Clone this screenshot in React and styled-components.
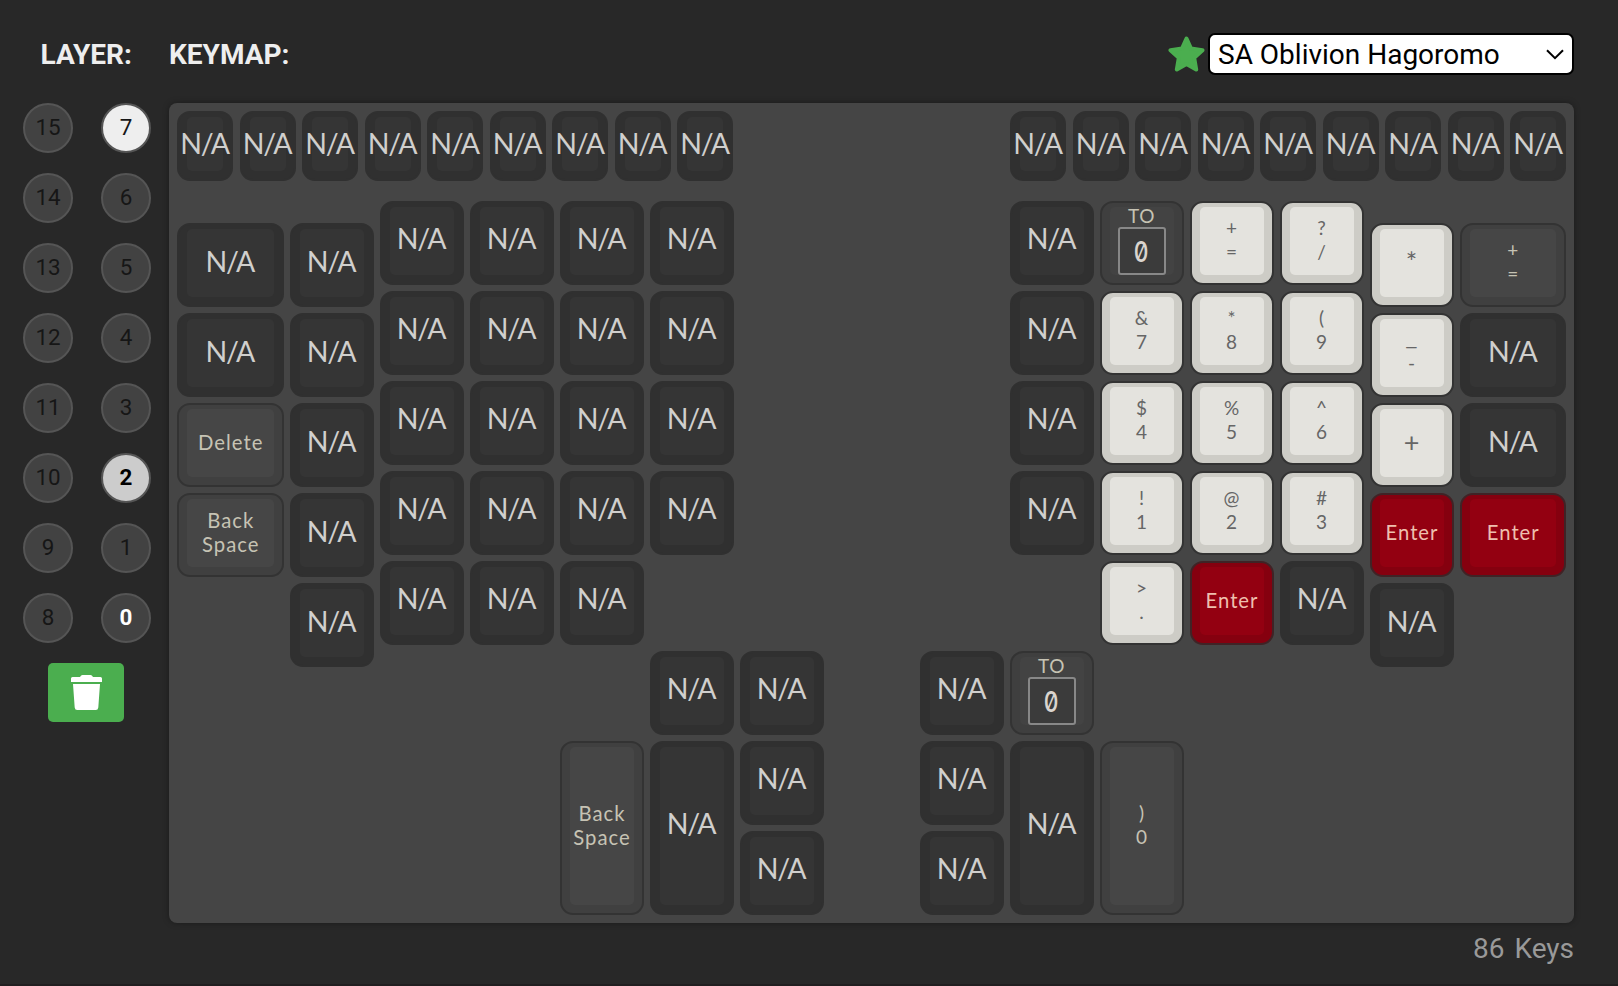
import React from "react";
import styled, { createGlobalStyle, css } from "styled-components";

const GlobalStyle = createGlobalStyle`
  body {
    margin: 0;
    background: #282828;
    font-family: Roboto, "Liberation Sans", sans-serif;
  }
`;

const Page = styled.div`
  box-sizing: border-box;
  display: flex;
  width: 1618px;
  height: 986px;
  overflow: hidden;
  background: #282828;
  border-bottom: 2px solid #211f20;
`;

const Sidebar = styled.aside`
  display: flex;
  flex-direction: column;
  width: 169px;
`;

const Heading = styled.h3`
  margin: 0;
  font-size: 28px;
  line-height: 34px;
  font-weight: 700;
  color: #eee;
`;

const SidebarHead = styled.div`
  box-sizing: border-box;
  height: 103px;
  padding: 38px 0 0 40.5px;
`;

const LayerGrid = styled.div`
  display: grid;
  grid-template-columns: 50px 50px;
  gap: 20px 28px;
  padding-left: 23px;
`;

const layerTone = {
  idle: css`
    background: #424242;
    color: #161616;
  `,
  filled: css`
    background: #424242;
    color: #fff;
    font-weight: 700;
  `,
  current: css`
    background: #eee;
    color: #161616;
  `,
  lit: css`
    background: #ccc;
    color: #000;
    font-weight: 700;
  `,
};

const LayerButton = styled.button`
  box-sizing: border-box;
  width: 50px;
  height: 50px;
  padding: 0 0 2px;
  border: 2px solid #555;
  border-radius: 50%;
  font-family: inherit;
  font-size: 22.4px;
  ${(p) => layerTone[p.$tone]}
`;

const ClearButton = styled.button`
  display: flex;
  align-items: center;
  justify-content: center;
  width: 76px;
  height: 59px;
  margin: 20px 0 0 48px;
  padding: 0;
  border: 0;
  border-radius: 5px;
  background: #4bae4f;
`;

const Main = styled.main`
  display: flex;
  flex-direction: column;
  width: 1405px;
`;

const MainHead = styled.header`
  box-sizing: border-box;
  display: flex;
  justify-content: space-between;
  height: 103px;
  padding: 33px 0 0;
`;

const TitleSlot = styled.div`
  padding-top: 5px;
`;

const Picker = styled.div`
  display: flex;
  height: 42px;
`;

const StarIcon = styled.svg`
  display: block;
  width: 37px;
  height: 36px;
  margin: 2.5px 3.5px 0 0;
`;

const SelectBox = styled.div`
  box-sizing: border-box;
  display: flex;
  align-items: center;
  justify-content: space-between;
  width: 366px;
  height: 42px;
  padding: 0 8px;
  border: 2px solid #000;
  border-radius: 7px;
  background: #fff;
  color: #000;
  font-size: 28px;
  line-height: 36px;
  white-space: nowrap;
`;

const SelectValue = styled.span`
  padding-top: 2px;
`;

const Board = styled.section`
  box-sizing: border-box;
  display: flex;
  justify-content: space-between;
  height: 820px;
  padding: 8px;
  border-radius: 8px;
  background: #454545;
  box-shadow: 0 0 6px rgba(0, 0, 0, 0.35);
`;

const Half = styled.div`
  display: flex;
  flex-direction: column;
`;

const FunctionRow = styled.div`
  display: flex;
  gap: 6.5px;
  margin-bottom: 20px;
  align-self: ${(p) => p.$align};
`;

const Columns = styled.div`
  display: flex;
  gap: 6px;
`;

const Column = styled.div`
  display: flex;
  flex-direction: column;
  gap: 6px;
  padding-top: ${(p) => p.$drop || 0}px;
`;

const Gap = styled.div`
  height: 84px;
`;

const palette = {
  empty: { edge: "#303030", side: "#303030", top: "#353535", text: "#d0cfcd" },
  mod: { edge: "#333333", side: "#404040", top: "#464646", text: "#c6c3b4" },
  to: { edge: "#333333", side: "#3f3f3f", top: "#434343", text: "#c6c3b4" },
  light: { edge: "#333333", side: "#cdccc6", top: "#e4e3de", text: "#666666" },
  red: { edge: "#402326", side: "#85000f", top: "#930011", text: "#eebfae" },
};

const Cap = styled.div`
  box-sizing: border-box;
  width: ${(p) => p.$w}px;
  height: ${(p) => p.$h}px;
  padding: 4px 8px 8px;
  border: 2px solid ${(p) => palette[p.$kind].edge};
  border-radius: 13px;
  background: ${(p) => palette[p.$kind].side};
`;

const Face = styled.div`
  box-sizing: border-box;
  display: flex;
  flex-direction: column;
  align-items: center;
  justify-content: center;
  height: 100%;
  padding-bottom: ${(p) => (p.$kind === "to" ? 0 : 2)}px;
  border-radius: 5px;
  background: ${(p) => palette[p.$kind].top};
  color: ${(p) => palette[p.$kind].text};
  font-family: Lato, "Liberation Sans", sans-serif;
  font-size: 19px;
  line-height: 24px;
  white-space: nowrap;
`;

const EmptyText = styled.span`
  font-size: 28.5px;
  line-height: 34px;
  letter-spacing: -1.2px;
  margin: 0 -10px ${(p) => (p.$short ? 1 : 3.2)}px -11px;
`;

const legendSize = {
  word: css`
    font-size: 20.3px;
    letter-spacing: 1px;
    margin-right: -9px;
  `,
  symbol: css`
    font-size: 19px;
  `,
  large: css`
    font-size: 27px;
  `,
  wide: css`
    transform: scaleX(1.4);
    margin-top: -3px;
    margin-bottom: 1px;
  `,
};

const Legend = styled.span`
  margin: 0 -8px;
  ${(p) => legendSize[p.$size]}
`;

const LayerTarget = styled.span`
  box-sizing: border-box;
  display: flex;
  align-items: center;
  justify-content: center;
  flex: none;
  width: 48px;
  height: 48px;
  border: 2px solid #888;
  border-radius: 3px;
  background: #3b3b3b;
  color: #dad4ce;
  font-family: Inter, sans-serif;
  font-size: 28.5px;
  font-weight: 500;
  font-feature-settings: "zero";
`;

const Narrow = styled.span`
  padding-top: 2px;
  transform: scaleX(0.8);
`;

const ToLegend = styled.span`
  height: 23px;
  line-height: 18px;
  letter-spacing: 0.6px;
`;

const KeyCount = styled.footer`
  margin-top: 9px;
  text-align: right;
  font-size: 28px;
  line-height: 34px;
  word-spacing: 3px;
  color: #999;
`;

const NA = { kind: "empty" };
const light = (...legend) => ({ kind: "light", legend });
const mod = (...legend) => ({ kind: "mod", legend });
const TO = { kind: "to" };
const ENTER = { kind: "red", legend: ["Enter"] };
const tall = (key) => ({ ...key, h: 174 });
const wide = (key) => ({ ...key, w: 106.5 });
const repeat = (n, key = NA) => Array(n).fill(key);

const functionKeys = repeat(9, { ...NA, w: 56, h: 70 });

const leftColumns = [
  { drop: 22.4, keys: [NA, NA, mod("Delete"), mod("Back", "Space")].map(wide) },
  { drop: 22.4, keys: repeat(5) },
  { keys: repeat(5) },
  { keys: repeat(5) },
  { keys: [...repeat(5), null, tall(mod("Back", "Space"))] },
  { keys: [...repeat(4), null, NA, tall(NA)] },
  { keys: [...repeat(5, null), NA, NA, NA] },
];

const rightColumns = [
  { keys: [...repeat(5, null), NA, NA, NA] },
  { keys: [...repeat(4), null, TO, tall(NA)] },
  {
    keys: [TO, light("&", "7"), light("$", "4"), light("!", "1"), light(">", "."), null, tall(mod(")", "0"))],
  },
  { keys: [light("+", "="), light("*", "8"), light("%", "5"), light("@", "2"), ENTER] },
  { keys: [light("?", "/"), light("(", "9"), light("^", "6"), light("#", "3"), NA] },
  { drop: 22.4, keys: [light("*"), light("_", "-"), light("+"), ENTER, NA] },
  { drop: 22.4, keys: [mod("+", "="), NA, NA, ENTER].map(wide) },
];

const layers = [15, 7, 14, 6, 13, 5, 12, 4, 11, 3, 10, 2, 9, 1, 8, 0];
const layerTones = { 7: "current", 2: "lit", 0: "filled" };

function sizeOf(line, lineCount) {
  if (line.length > 1) return "word";
  if (line === "_") return "wide";
  return lineCount === 1 ? "large" : "symbol";
}

function Key({ kind, legend, w = 84, h = 84 }) {
  return (
    <Cap $kind={kind} $w={w} $h={h}>
      <Face $kind={kind}>
        {kind === "empty" && <EmptyText $short={h < 84}>N/A</EmptyText>}
        {kind === "to" && (
          <>
            <ToLegend>TO</ToLegend>
            <LayerTarget>
              <Narrow>0</Narrow>
            </LayerTarget>
          </>
        )}
        {legend &&
          legend.map((line) => (
            <Legend key={line} $size={sizeOf(line, legend.length)}>
              {line}
            </Legend>
          ))}
      </Face>
    </Cap>
  );
}

function BoardHalf({ columns, align }) {
  return (
    <Half>
      <FunctionRow $align={align}>
        {functionKeys.map((key, i) => (
          <Key key={i} {...key} />
        ))}
      </FunctionRow>
      <Columns>
        {columns.map((column, i) => (
          <Column key={i} $drop={column.drop}>
            {column.keys.map((key, j) => (key ? <Key key={j} {...key} /> : <Gap key={j} />))}
          </Column>
        ))}
      </Columns>
    </Half>
  );
}

export default function App() {
  return (
    <>
      <GlobalStyle />
      <Page>
        <Sidebar>
          <SidebarHead>
            <Heading>LAYER:</Heading>
          </SidebarHead>
          <LayerGrid>
            {layers.map((n) => (
              <LayerButton key={n} $tone={layerTones[n] || "idle"}>
                {n}
              </LayerButton>
            ))}
          </LayerGrid>
          <ClearButton aria-label="Clear layer">
            <svg width="31" height="35" viewBox="0 0 31 35" fill="#fff">
              <path d="M1.500 2H9Q10 0 11.500 0H19.500Q21 0 22 2H29.500Q31 2 31 3.500V7H0V3.500Q0 2 1.500 2ZM2 9H29L27.300 32.500Q27 35 24.800 35H6.200Q4 35 3.700 32.500Z" />
            </svg>
          </ClearButton>
        </Sidebar>
        <Main>
          <MainHead>
            <TitleSlot>
              <Heading>KEYMAP:</Heading>
            </TitleSlot>
            <Picker>
              <StarIcon viewBox="0 0 37 36" fill="#4bae4f" stroke="#4bae4f" strokeWidth="4" strokeLinejoin="round">
                <path d="M18.500 2.500L23 12.600L34.500 14.200L26.200 21.800L28.200 33.500L18.500 28L8.800 33.500L10.800 21.800L2.500 14.200L14 12.600Z" />
              </StarIcon>
              <SelectBox>
                <SelectValue>SA Oblivion Hagoromo</SelectValue>
                <svg width="18" height="11" viewBox="0 0 18 11" fill="none" stroke="#000" strokeWidth="2">
                  <path d="M1 1.200L9 9.200L17 1.200" />
                </svg>
              </SelectBox>
            </Picker>
          </MainHead>
          <Board>
            <BoardHalf columns={leftColumns} align="flex-start" />
            <BoardHalf columns={rightColumns} align="flex-end" />
          </Board>
          <KeyCount>86 Keys</KeyCount>
        </Main>
      </Page>
    </>
  );
}
